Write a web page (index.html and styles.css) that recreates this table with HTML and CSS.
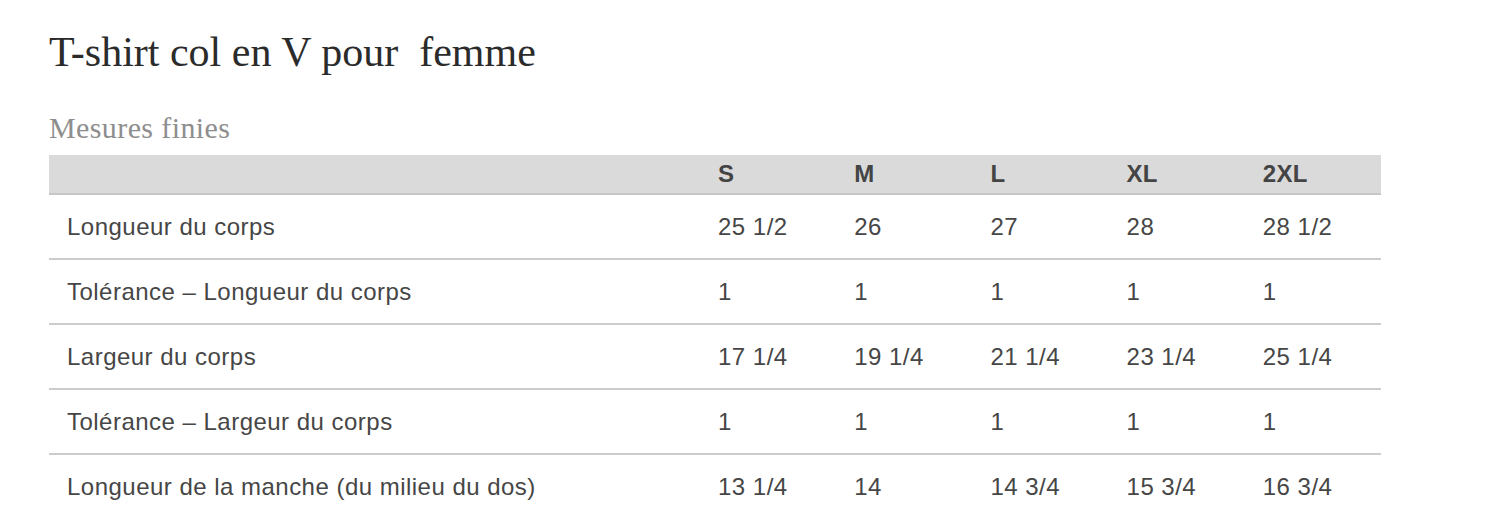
FILE: index.html
```html
<!DOCTYPE html>
<html lang="fr">
<head>
<meta charset="utf-8">
<title>T-shirt col en V pour femme</title>
<link rel="stylesheet" href="styles.css">
</head>
<body>
<div class="page">
  <h1 class="title">T-shirt col en V pour&nbsp; femme</h1>
  <h2 class="subtitle">Mesures finies</h2>
  <table class="sizes">
    <thead>
      <tr><th class="label"></th><th>S</th><th>M</th><th>L</th><th>XL</th><th>2XL</th></tr>
    </thead>
    <tbody>
      <tr><td class="label">Longueur du corps</td><td>25 1/2</td><td>26</td><td>27</td><td>28</td><td>28 1/2</td></tr>
      <tr><td class="label">Tolérance – Longueur du corps</td><td>1</td><td>1</td><td>1</td><td>1</td><td>1</td></tr>
      <tr><td class="label">Largeur du corps</td><td>17 1/4</td><td>19 1/4</td><td>21 1/4</td><td>23 1/4</td><td>25 1/4</td></tr>
      <tr><td class="label">Tolérance – Largeur du corps</td><td>1</td><td>1</td><td>1</td><td>1</td><td>1</td></tr>
      <tr><td class="label">Longueur de la manche (du milieu du dos)</td><td>13 1/4</td><td>14</td><td>14 3/4</td><td>15 3/4</td><td>16 3/4</td></tr>
    </tbody>
  </table>
</div>
</body>
</html>
```
FILE: styles.css
```css
html, body {
  margin: 0;
  padding: 0;
  background: #ffffff;
}
.page {
  padding: 26px 0 0 49px;
  width: 1332px;
}
.title {
  margin: 0;
  font-family: "Liberation Serif", "Times New Roman", serif;
  font-weight: normal;
  font-size: 42px;
  line-height: 52px;
  color: #2b2b2b;
}
.subtitle {
  margin: 33px 0 0 0;
  font-family: "Liberation Serif", "Times New Roman", serif;
  font-weight: normal;
  font-size: 30px;
  letter-spacing: 0.4px;
  line-height: 34px;
  color: #8e8e8e;
}
.sizes {
  margin-top: 10px;
  width: 1332px;
  border-collapse: collapse;
  table-layout: fixed;
  font-family: "Liberation Sans", Arial, sans-serif;
  font-size: 24px;
  letter-spacing: 0.48px;
  color: #464646;
}
.sizes th, .sizes td {
  text-align: left;
  padding: 0 0 0 18px;
  white-space: nowrap;
}
.sizes th.label, .sizes td.label {
  width: 633px;
}
.sizes thead th {
  height: 38px;
  background: #dadada;
  border-bottom: 2px solid #c6c6c6;
  font-weight: bold;
  letter-spacing: 0.3px;
  color: #444444;
}
.sizes tbody td {
  height: 63px;
  border-bottom: 2px solid #cccccc;
}
.sizes tbody tr:last-child td {
  border-bottom: none;
}
```
